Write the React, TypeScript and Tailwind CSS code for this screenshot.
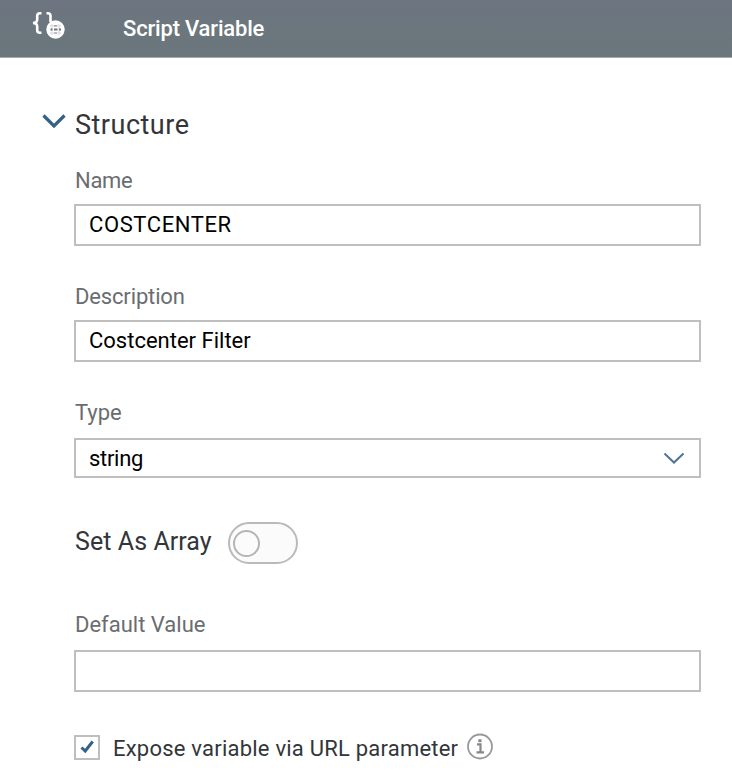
import { useState } from "react";

interface TextFieldProps {
  id: string;
  label: string;
  labelClass?: string;
  inputClass?: string;
  value: string;
  onChange: (value: string) => void;
}

function TextField({ id, label, labelClass = "", inputClass = "", value, onChange }: TextFieldProps) {
  return (
    <div className="flex flex-col">
      <label htmlFor={id} className={`h-9 self-start pt-px pl-px text-[22px] leading-6 whitespace-nowrap text-[#6a6d70] ${labelClass}`}>
        {label}
      </label>
      <input
        id={id}
        type="text"
        className={`h-[42px] w-full border-2 border-[#bfbfbf] bg-white px-[13px] pb-0.5 text-[22px] text-black outline-none ${inputClass}`}
        value={value}
        onChange={(e) => onChange(e.target.value)}
      />
    </div>
  );
}

function ScriptVariableIcon() {
  return (
    <svg width="38" height="32" viewBox="0 0 38 32" fill="none" aria-hidden="true">
      <path d="M13.5 3.2H12c-2 0-2.8.8-2.8 2.5v3.8c0 2.2-1 3.3-4.2 3.5 3.2.2 4.2 1.3 4.2 3.5v3.8c0 1.7.8 2.5 2.8 2.5h1.5" stroke="#fff" strokeWidth="2.6" />
      <path d="M18.5 3.2h1.2c2 0 2.8.8 2.8 2.5V12" stroke="#fff" strokeWidth="2.6" />
      <circle cx="27.5" cy="19.5" r="9.2" fill="#fff" />
      <path d="M22 15.8h11M22 23h11M24 14v11M31 14v11" stroke="#d5d8dd" strokeWidth="1" />
      <path d="M22.5 19.5h2M26 19.5h3.5M31 19.5h2" stroke="#6d7580" strokeWidth="1.8" />
      <path d="M26 15.8h3M26 23h3" stroke="#8d94a0" strokeWidth="1.2" />
    </svg>
  );
}

export default function App() {
  const [name, setName] = useState("COSTCENTER");
  const [description, setDescription] = useState("Costcenter Filter");
  const [defaultValue, setDefaultValue] = useState("");
  const [isArray, setIsArray] = useState(false);
  const [exposed, setExposed] = useState(true);

  return (
    <div className="h-[784px] w-[732px] overflow-hidden bg-white font-[Roboto,sans-serif]">
      <header className="flex h-[58px] items-start border-b border-[#a5abb0] bg-linear-to-b from-[#6d7580] to-[#6a777b] pt-[10px] pl-[28px] text-white">
        <ScriptVariableIcon />
        <h1 className="mt-[7px] ml-[57px] text-[22px] leading-6 font-medium tracking-[-0.18px] whitespace-nowrap">Script Variable</h1>
      </header>

      <main className="pt-[50px] pr-[31px] pl-[74px]">
        <button type="button" className="-ml-[34px] flex h-8 items-center">
          <svg width="28" height="24" viewBox="0 0 28 24" fill="none" className="mb-[6px]" aria-hidden="true">
            <path d="M3.5 6.5 14 17 24.5 6.5" stroke="#346187" strokeWidth="3.2" />
          </svg>
          <span className="mt-0.5 ml-[7px] text-[27px] leading-8 tracking-[0.5px] text-[#32363a]">Structure</span>
        </button>

        <div className="mt-7">
          <TextField id="name" label="Name" labelClass="tracking-[-0.3px]" inputClass="tracking-[0.6px]" value={name} onChange={setName} />
        </div>
        <div className="mt-[38px]">
          <TextField id="description" label="Description" labelClass="tracking-[-0.15px]" value={description} onChange={setDescription} />
        </div>

        <div className="mt-[38px] flex flex-col">
          <span className="h-[38px] pt-px pl-px text-[22px] leading-6 text-[#6a6d70]">Type</span>
          <button type="button" className="flex h-10 items-center justify-between border-2 border-[#bfbfbf] pr-[13px] pl-[13px] text-[22px] text-black">
            <span className="pt-0.5 leading-6 tracking-[-0.3px]">string</span>
            <svg width="24" height="20" viewBox="0 0 24 20" fill="none" aria-hidden="true">
              <path d="M2.5 5.5 12 14.5 21.5 5.5" stroke="#4c7599" strokeWidth="2" />
            </svg>
          </button>
        </div>

        <div className="mt-[44px] flex h-[42px] items-center">
          <span className="mb-[3px] w-[154px] pl-px text-[25px] leading-8 tracking-[0.07px] whitespace-nowrap text-[#32363a]">Set As Array</span>
          <button
            type="button"
            role="switch"
            aria-checked={isArray}
            aria-label="Set As Array"
            className={`flex h-[42px] w-[70px] items-center rounded-full border-2 border-[#bababa] bg-[#fbfbfb] px-[3px] ${isArray ? "justify-end" : "justify-start"}`}
            onClick={() => setIsArray(!isArray)}
          >
            <span className="size-[27px] rounded-full border-2 border-[#b5b5b5]" />
          </button>
        </div>

        <div className="mt-[48px]">
          <TextField id="default-value" label="Default Value" labelClass="mb-0.5" value={defaultValue} onChange={setDefaultValue} />
        </div>

        <div className="mt-[41px] flex h-7 items-center">
          <button
            type="button"
            role="checkbox"
            aria-checked={exposed}
            aria-label="Expose variable via URL parameter"
            className="mt-px flex h-[25px] w-[26px] items-center justify-center border-2 border-[#bfbfbf]"
            onClick={() => setExposed(!exposed)}
          >
            {exposed && (
              <svg width="18" height="18" viewBox="0 0 18 18" fill="none" className="mb-0.5" aria-hidden="true">
                <path d="M3.5 9.5 7.2 13 14.7 3.5" stroke="#346187" strokeWidth="3" />
              </svg>
            )}
          </button>
          <span className="mt-[3px] ml-[13px] w-[353px] text-[22px] leading-6 tracking-[0.22px] whitespace-nowrap text-[#32363a]">Expose variable via URL parameter</span>
          <svg width="28" height="28" viewBox="0 0 28 28" fill="none" aria-hidden="true">
            <circle cx="14" cy="13.5" r="12" stroke="#96989b" strokeWidth="1.8" />
            <path d="M11 11.3h3.5v8M10.5 19.3h7.5" stroke="#85878a" strokeWidth="2.2" />
            <path d="M12.3 6.3h3.2v2.9h-3.2z" fill="#85878a" />
          </svg>
        </div>
      </main>
    </div>
  );
}
